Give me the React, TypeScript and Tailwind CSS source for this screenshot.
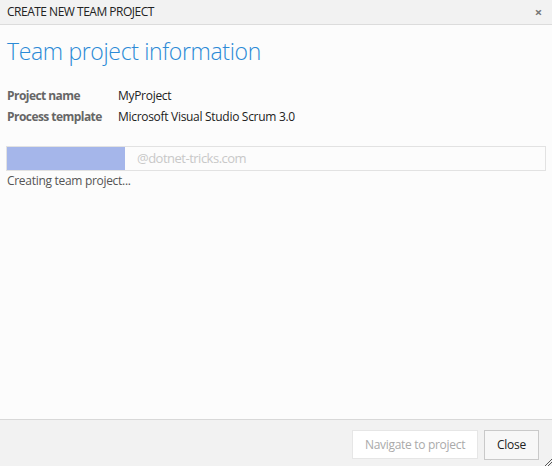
import React from "react";

export default function App() {
  const font = { fontFamily: '"Open Sans", "Noto Sans", sans-serif' };
  return (
    <div className="w-[552px] h-[466px] flex flex-col bg-[#fcfcfc] overflow-hidden text-[12px] tracking-[-0.3px]" style={font}>
      <div className="h-[25px] shrink-0 flex items-center justify-between bg-[#f2f2f2] border-b border-[#dcdcdc] pl-[7px] pr-[10px]">
        <span className="text-[12px] text-[#222] tracking-[-0.5px]">CREATE NEW TEAM PROJECT</span>
        <span className="text-[#777] text-[13px] font-bold leading-none">×</span>
      </div>
      <div className="flex-1 flex flex-col px-[7px]">
        <h1 className="mt-[10px] text-[23px] font-light text-[#2b8ad6] leading-[32px] tracking-[-0.35px]">Team project information</h1>
        <div className="mt-[20px] grid grid-cols-[111px_1fr] gap-y-[3px] leading-[18px]">
          <span className="font-bold text-[#666] tracking-[-0.55px]">Project name</span>
          <span className="text-[#222]">MyProject</span>
          <span className="font-bold text-[#666] tracking-[-0.55px]">Process template</span>
          <span className="text-[#222]">Microsoft Visual Studio Scrum 3.0</span>
        </div>
        <div className="mt-[20px] -ml-[1px] w-[540px] h-[25px] flex border border-[#e2e2e2] bg-[#fcfcfc]">
          <div className="w-[118px] h-full bg-[#a5b6ea]" />
          <span className="ml-[12px] self-center text-[13px] text-[#c8c8c8] tracking-[-0.5px]">@dotnet-tricks.com</span>
        </div>
        <div className="mt-[1px] text-[#555] leading-[18px]">Creating team project...</div>
      </div>
      <div className="relative h-[47px] shrink-0 bg-[#f2f2f2] border-t border-[#d8d8d8] flex items-start justify-end gap-[6px] pt-[10px] pr-[13px]">
        <button className="w-[126px] h-[29px] bg-white border border-[#e6e6e6] text-[#aaa] text-[12px]">Navigate to project</button>
        <button className="w-[55px] h-[30px] bg-[#f7f7f7] border border-[#c9c9c9] text-[#222] text-[12px]">Close</button>
        <svg className="absolute right-0 bottom-0" width="8" height="8" viewBox="0 0 8 8">
          <line x1="1" y1="8" x2="8" y2="1" stroke="#555" strokeWidth="1" />
          <line x1="4" y1="8" x2="8" y2="4" stroke="#555" strokeWidth="1" />
        </svg>
      </div>
    </div>
  );
}
